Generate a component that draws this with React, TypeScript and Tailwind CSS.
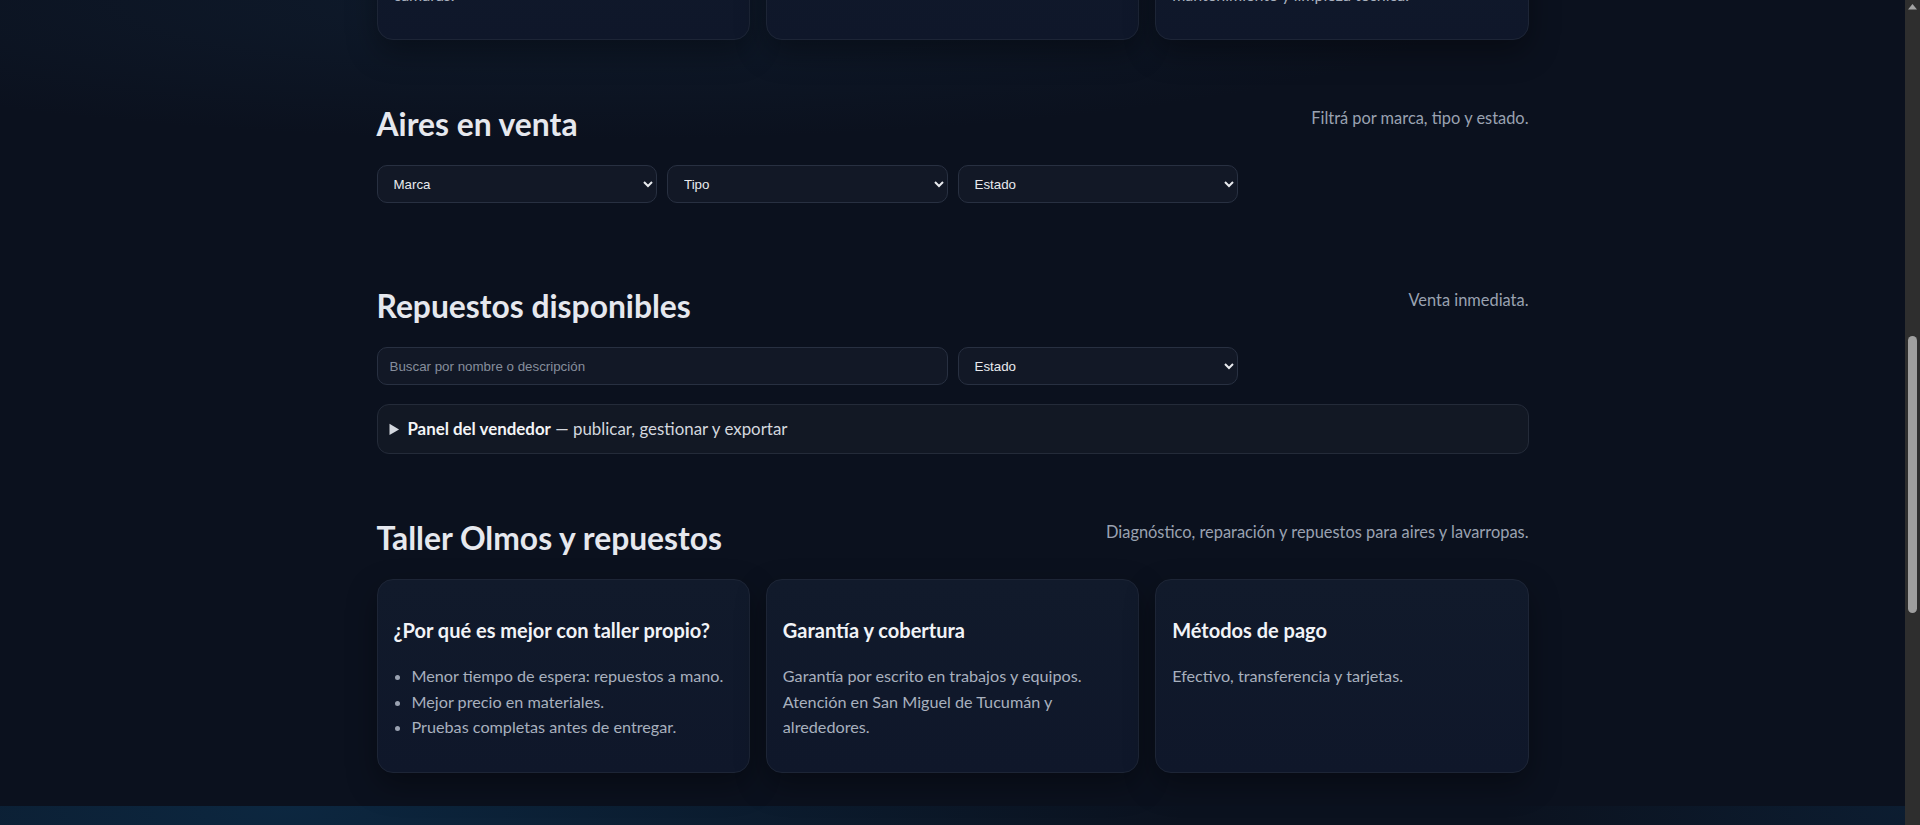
import { useLayoutEffect, useRef } from "react";

const servicios = [
  {
    titulo: "Aires acondicionados",
    texto: "Instalación, carga de gas, reparación de placas y service de equipos split, ventana, centrales y cámaras.",
  },
  {
    titulo: "Lavarropas",
    texto: "Reparación de automáticos y semiautomáticos de todas las marcas.",
  },
  {
    titulo: "Service preventivo",
    texto: "Revisión general de equipos antes de cada temporada con control de presión, mantenimiento y limpieza técnica.",
  },
];

const SectionHeader = ({ title, subtitle }: { title: string; subtitle: string }) => (
  <div className="mb-[23px] flex items-start justify-between">
    <h2 className="text-[31.8px] font-bold leading-[36px] text-[#e6e8ee]">{title}</h2>
    <p className="text-[16.4px] leading-6 text-[#9aa2b1]">{subtitle}</p>
  </div>
);

const Select = ({ label }: { label: string }) => (
  <select className="h-[38px] w-full rounded-[10px] border border-[#283041] bg-[#121826] px-3 font-['Liberation_Sans',Arial,sans-serif] text-[13.33px] text-[#e8eaee] outline-none [color-scheme:dark]">
    <option>{label}</option>
  </select>
);

const Card = ({ title, children }: { title: string; children: React.ReactNode }) => (
  <div className="rounded-2xl border border-[#1d2536] bg-[linear-gradient(180deg,#111a2b,#0f172a)] px-4 py-4 shadow-[0_12px_30px_rgba(0,0,0,0.35)]">
    <h3 className="my-[18.72px] text-[20px] font-bold leading-[30px] text-[#f1f3f7]">{title}</h3>
    {children}
  </div>
);

// the page's own scrollbar, drawn: headless pages hide it
const Scrollbar = () => (
  <div className="flex w-[15px] shrink-0 flex-col items-center bg-[#2e2e2e]">
    <svg width="9" height="6" viewBox="0 0 9 6" className="mt-[4px]">
      <path d="M4.5 0 L9 5.5 L0 5.5 Z" fill="#a3a3a3" />
    </svg>
    <div className="mt-[326px] h-[277px] w-[9px] rounded-full bg-[#9f9f9f]" />
  </div>
);

export default function App() {
  const scroller = useRef<HTMLDivElement>(null);
  const aires = useRef<HTMLElement>(null);

  useLayoutEffect(() => {
    const s = scroller.current;
    const a = aires.current;
    if (!s || !a) return;
    s.scrollTop = a.getBoundingClientRect().top - s.getBoundingClientRect().top + s.scrollTop - 73;
  }, []);

  return (
    <div className="flex h-screen bg-[#0b111e] font-[Lato,sans-serif] text-[#a8b0be]">
      <div
        ref={scroller}
        className="min-w-0 flex-1 overflow-y-scroll bg-[radial-gradient(ellipse_900px_140px_at_30%_0%,rgba(24,52,80,0.28),transparent)] [scrollbar-width:none]"
      >
        <header className="border-b border-[#1a2233] bg-[#0b111e]">
          <div className="mx-auto flex h-[72px] w-full max-w-[1152px] items-center justify-between">
            <span className="text-xl font-bold text-[#e6e8ee]">Taller Olmos</span>
            <nav className="flex gap-6 text-[15px] text-[#c3c9d4]">
              <a href="#servicios">Servicios</a>
              <a href="#aires">Aires</a>
              <a href="#repuestos">Repuestos</a>
              <a href="#contacto">Contacto</a>
            </nav>
          </div>
        </header>

        <section className="min-h-[634px] bg-[radial-gradient(ellipse_at_30%_20%,#10263c,#0b111e_65%)]">
          <div className="mx-auto flex min-h-[634px] w-full max-w-[1152px] flex-col justify-center gap-5">
            <h1 className="text-5xl font-bold text-[#eef1f5]">Reparación de aires y lavarropas</h1>
            <p className="max-w-[640px] text-lg leading-relaxed text-[#a8b0be]">
              Taller propio en San Miguel de Tucumán. Venta de equipos, repuestos originales y service a domicilio.
            </p>
            <div className="flex gap-3">
              <a className="rounded-lg bg-[#1e6fd9] px-5 py-3 font-bold text-white" href="#contacto">Pedir turno</a>
              <a className="rounded-lg border border-[#2a3346] px-5 py-3 text-[#e6e8ee]" href="#aires">Ver equipos</a>
            </div>
          </div>
        </section>

        <section id="servicios" className="py-[33px]">
          <div className="mx-auto w-full max-w-[1152px]">
            <SectionHeader title="Servicios" subtitle="Trabajamos con todas las marcas." />
            <div className="grid grid-cols-3 gap-4">
              {servicios.map((s) => (
                <Card key={s.titulo} title={s.titulo}>
                  <p className="my-4 text-base leading-[1.6]">{s.texto}</p>
                </Card>
              ))}
            </div>
          </div>
        </section>

        <section id="aires" ref={aires} className="py-[33px]">
          <div className="mx-auto w-full max-w-[1152px]">
            <SectionHeader title="Aires en venta" subtitle="Filtrá por marca, tipo y estado." />
            <div className="mb-[19px] grid grid-cols-4 gap-[10px]">
              <Select label="Marca" />
              <Select label="Tipo" />
              <Select label="Estado" />
            </div>
          </div>
        </section>

        <section id="repuestos" className="py-[33px]">
          <div className="mx-auto w-full max-w-[1152px]">
            <SectionHeader title="Repuestos disponibles" subtitle="Venta inmediata." />
            <div className="mb-[19px] grid grid-cols-4 gap-[10px]">
              <input
                placeholder="Buscar por nombre o descripción"
                className="col-span-2 h-[38px] rounded-[10px] border border-[#283041] bg-[#121826] px-3 font-['Liberation_Sans',Arial,sans-serif] text-[13.33px] text-[#e5e7eb] outline-none placeholder:text-[#868e9c]"
              />
              <Select label="Estado" />
            </div>
            <details className="rounded-xl border border-[#242b39] bg-[#121824] px-3 py-[11px] text-[16.9px] leading-[25.6px] text-[#d3d7de]">
              <summary className="cursor-pointer">
                <strong className="font-bold text-[#f3f4f6]">Panel del vendedor</strong> — publicar, gestionar y exportar
              </summary>
            </details>
          </div>
        </section>

        <section className="py-[33px]">
          <div className="mx-auto w-full max-w-[1152px]">
            <SectionHeader
              title="Taller Olmos y repuestos"
              subtitle="Diagnóstico, reparación y repuestos para aires y lavarropas."
            />
            <div className="grid grid-cols-3 gap-4">
              <Card title="¿Por qué es mejor con taller propio?">
                <ul className="my-4 list-disc pl-[18px] text-[16.2px] leading-[25.6px] marker:text-[#9aa2b1]">
                  <li>Menor tiempo de espera: repuestos a mano.</li>
                  <li>Mejor precio en materiales.</li>
                  <li>Pruebas completas antes de entregar.</li>
                </ul>
              </Card>
              <Card title="Garantía y cobertura">
                <p className="my-4 text-[16.2px] leading-[25.6px]">
                  Garantía por escrito en trabajos y equipos. Atención en San Miguel de Tucumán y alrededores.
                </p>
              </Card>
              <Card title="Métodos de pago">
                <p className="my-4 text-[16.2px] leading-[25.6px]">Efectivo, transferencia y tarjetas.</p>
              </Card>
            </div>
          </div>
        </section>

        <footer
          id="contacto"
          className="min-h-[612px] bg-[#0b121f] bg-[radial-gradient(ellipse_900px_300px_at_15%_0%,#0c2740,transparent),radial-gradient(ellipse_400px_200px_at_100%_0%,#0c1d31,transparent)]"
        >
          <div className="mx-auto grid w-full max-w-[1152px] grid-cols-3 gap-8 py-16">
            <div>
              <h4 className="mb-3 text-lg font-bold text-[#e6e8ee]">Taller Olmos</h4>
              <p className="leading-relaxed">Aires acondicionados, lavarropas y repuestos.</p>
            </div>
            <div>
              <h4 className="mb-3 text-lg font-bold text-[#e6e8ee]">Contacto</h4>
              <p className="leading-relaxed">San Miguel de Tucumán</p>
              <p className="leading-relaxed">WhatsApp: 381 000-0000</p>
            </div>
            <div>
              <h4 className="mb-3 text-lg font-bold text-[#e6e8ee]">Horarios</h4>
              <p className="leading-relaxed">Lunes a viernes de 8 a 18 h.</p>
              <p className="leading-relaxed">Sábados de 9 a 13 h.</p>
            </div>
          </div>
          <p className="pb-10 text-center text-sm text-[#6b7384]">© Taller Olmos. Todos los derechos reservados.</p>
        </footer>
      </div>
      <Scrollbar />
    </div>
  );
}
